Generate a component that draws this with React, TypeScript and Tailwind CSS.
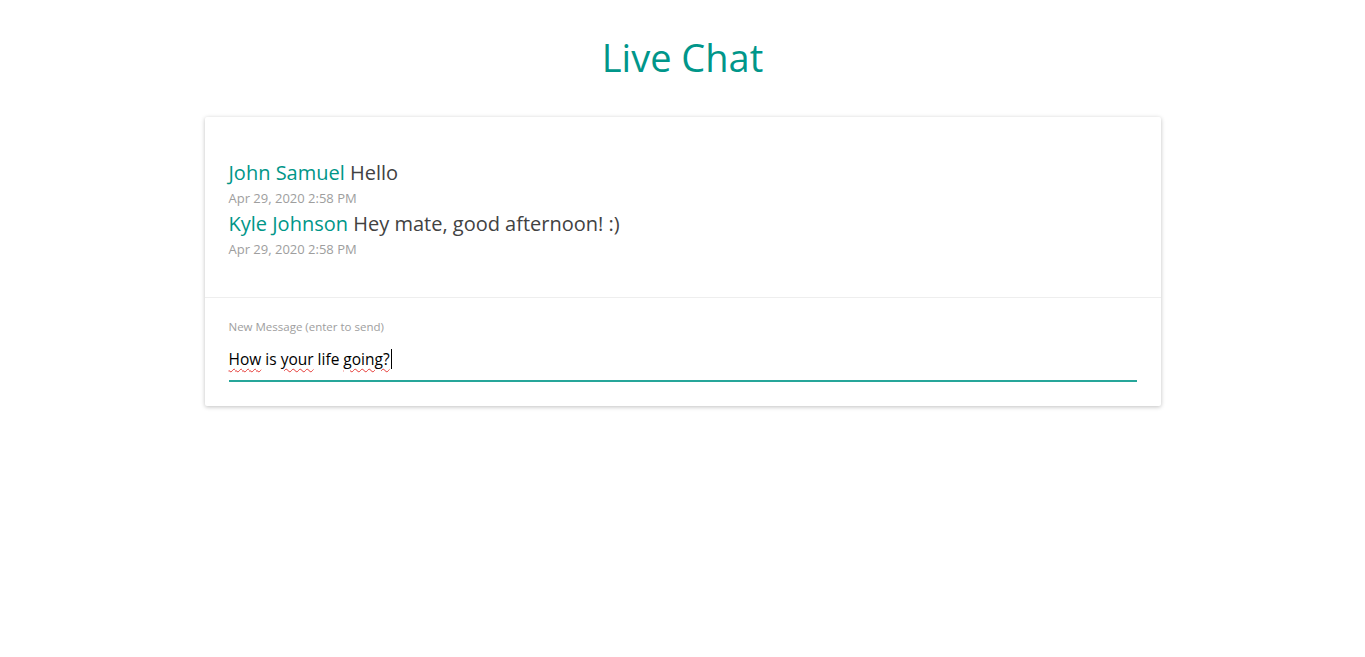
import { useState } from "react";

type Message = {
  id: number;
  author: string;
  text: string;
  time: string;
};

const messages: Message[] = [
  { id: 1, author: "John Samuel", text: "Hello", time: "Apr 29, 2020 2:58 PM" },
  {
    id: 2,
    author: "Kyle Johnson",
    text: "Hey mate, good afternoon! :)",
    time: "Apr 29, 2020 2:58 PM",
  },
];

// words the browser's spellchecker flagged in the screenshot
const squiggle = "underline decoration-wavy decoration-[#e53935] decoration-1 underline-offset-[3px]";

export default function App() {
  const [draft] = useState("How is your life going?");

  return (
    <div
      className="min-h-screen bg-white"
      style={{ fontFamily: '"Open Sans", "Noto Sans", sans-serif' }}
    >
      <h1 className="pt-[31px] text-center text-[38px] leading-[52px] text-[#00968a]">
        Live Chat
      </h1>

      <div className="mx-auto mt-[34px] w-[956px] rounded-[2px] bg-white shadow-[0_1px_4px_rgba(0,0,0,0.25)]">
        <div className="px-6 pt-[42px] pb-[36px]">
          {messages.map((m) => (
            <div key={m.id}>
              <p className="text-[20px] leading-[27px] text-[#424242]">
                <span className="text-[#009688]">{m.author}</span> {m.text}
              </p>
              <p className="text-[13px] leading-[24px] text-[#9e9e9e]">{m.time}</p>
            </div>
          ))}
        </div>

        <div className="border-t border-[#eeeeee] px-6 pt-[22px] pb-[24px]">
          <label className="block text-[11.5px] leading-[14px] text-[#9e9e9e]">
            New Message (enter to send)
          </label>
          <div
            aria-label={draft}
            className="mt-[10px] flex items-center border-b-2 border-[#26a69a] pb-[11px] pt-[5px] text-[15.5px] leading-[20px] text-black"
          >
            <span className={squiggle}>How</span>
            <span className="whitespace-pre"> is </span>
            <span className={squiggle}>your</span>
            <span className="whitespace-pre"> life </span>
            <span className={squiggle}>going?</span>
            <span className="ml-[1px] h-[20px] w-[1px] bg-black" />
          </div>
        </div>
      </div>
    </div>
  );
}
